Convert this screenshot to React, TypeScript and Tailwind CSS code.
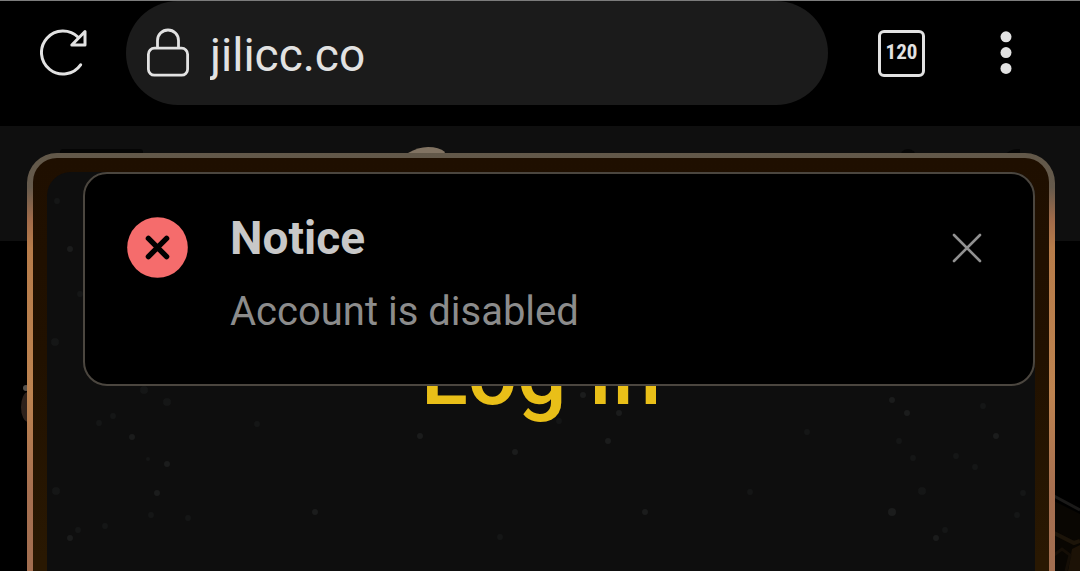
import React, { useState } from 'react';

interface Speck {
  x: number;
  y: number;
  r: number;
  tone: 'dim' | 'bright';
}

// Dust on the dialog background, in dialog coordinates
const specks: Speck[] = [
  { x: 10, y: 29, r: 3, tone: 'dim' },
  { x: 23, y: 77, r: 3, tone: 'bright' },
  { x: 33, y: 122, r: 3, tone: 'dim' },
  { x: 8, y: 170, r: 4, tone: 'dim' },
  { x: 97, y: 218, r: 4, tone: 'dim' },
  { x: 120, y: 230, r: 4, tone: 'dim' },
  { x: 52, y: 251, r: 3, tone: 'dim' },
  { x: 66, y: 244, r: 3, tone: 'dim' },
  { x: 85, y: 265, r: 3, tone: 'bright' },
  { x: 101, y: 287, r: 2, tone: 'dim' },
  { x: 120, y: 292, r: 3, tone: 'bright' },
  { x: 9, y: 319, r: 4, tone: 'dim' },
  { x: 110, y: 321, r: 3, tone: 'bright' },
  { x: 104, y: 343, r: 3, tone: 'dim' },
  { x: 23, y: 366, r: 3, tone: 'bright' },
  { x: 31, y: 358, r: 3, tone: 'dim' },
  { x: 58, y: 354, r: 3, tone: 'dim' },
  { x: 141, y: 346, r: 3, tone: 'dim' },
  { x: 210, y: 252, r: 3, tone: 'dim' },
  { x: 268, y: 340, r: 3, tone: 'bright' },
  { x: 373, y: 264, r: 3, tone: 'bright' },
  { x: 468, y: 280, r: 3, tone: 'bright' },
  { x: 561, y: 269, r: 3, tone: 'bright' },
  { x: 536, y: 223, r: 3, tone: 'bright' },
  { x: 572, y: 241, r: 3, tone: 'bright' },
  { x: 453, y: 365, r: 3, tone: 'dim' },
  { x: 512, y: 249, r: 3, tone: 'dim' },
  { x: 598, y: 340, r: 3, tone: 'bright' },
  { x: 703, y: 320, r: 3, tone: 'dim' },
  { x: 760, y: 260, r: 3, tone: 'dim' },
  { x: 845, y: 228, r: 3, tone: 'bright' },
  { x: 860, y: 241, r: 3, tone: 'bright' },
  { x: 852, y: 269, r: 3, tone: 'dim' },
  { x: 866, y: 286, r: 3, tone: 'dim' },
  { x: 936, y: 234, r: 3, tone: 'dim' },
  { x: 949, y: 264, r: 3, tone: 'bright' },
  { x: 909, y: 284, r: 3, tone: 'dim' },
  { x: 928, y: 295, r: 3, tone: 'dim' },
  { x: 875, y: 319, r: 4, tone: 'dim' },
  { x: 845, y: 340, r: 4, tone: 'bright' },
  { x: 889, y: 366, r: 3, tone: 'bright' },
  { x: 898, y: 358, r: 3, tone: 'dim' },
  { x: 976, y: 321, r: 3, tone: 'dim' },
  { x: 970, y: 343, r: 3, tone: 'dim' }
];

const ReloadIcon: React.FC = () => (
  <svg width="48" height="50" viewBox="0 0 48 50" fill="none" stroke="#e2e2e2" strokeWidth="3" strokeLinecap="round" strokeLinejoin="round" aria-hidden="true">
    <path d="M38.2 9.3 A21.5 21.5 0 1 0 40.6 36.8" />
    <path d="M45 3.5 V17 H31.8 Z" />
  </svg>
);

const LockIcon: React.FC = () => (
  <svg className="shrink-0" width="44" height="50" viewBox="0 0 44 50" fill="none" stroke="#e2e2e2" strokeWidth="2.8" aria-hidden="true">
    <rect x="2.4" y="20.2" width="39.2" height="27" rx="6" />
    <path d="M11.5 20.2 V12.5 A10.5 10.5 0 0 1 32.5 12.5 V20.2" />
  </svg>
);

const MenuIcon: React.FC = () => (
  <svg width="12" height="44" viewBox="0 0 12 44" fill="#e2e2e2" aria-hidden="true">
    <circle cx="6" cy="5.8" r="5.5" />
    <circle cx="6" cy="21.6" r="5.5" />
    <circle cx="6" cy="37.4" r="5.5" />
  </svg>
);

const BrowserBar: React.FC = () => (
  <header className="flex h-[126px] items-start border-t border-[#7c7c7c] bg-black pl-10">
    <button type="button" aria-label="Reload" className="flex h-26 w-12 shrink-0 items-center">
      <ReloadIcon />
    </button>
    <div className="ml-[38px] flex h-26 min-w-0 flex-1 items-center rounded-full bg-[#1b1b1b] pl-5">
      <LockIcon />
      <input
        type="text"
        aria-label="Address"
        defaultValue="jilicc.co"
        className="ml-5 min-w-0 flex-1 bg-transparent pt-1 text-[46px] leading-[56px] text-[#e2e2e2] outline-none"
      />
    </div>
    <button type="button" aria-label="Tabs" className="ml-[50px] flex h-26 w-12 shrink-0 items-center">
      <span className="flex h-[47px] w-[47px] items-center justify-center rounded-md border-3 border-[#e2e2e2] font-['Roboto_Condensed','Roboto',sans-serif] text-[21px] font-bold text-[#e2e2e2]">
        120
      </span>
    </button>
    <button type="button" aria-label="More options" className="ml-[50px] flex h-26 w-[104px] shrink-0 items-center justify-start pl-6">
      <MenuIcon />
    </button>
  </header>
);

const LoginDialog: React.FC = () => (
  <section
    aria-label="Log In"
    className="absolute top-[27px] right-[25px] bottom-0 left-[27px] rounded-t-[30px] bg-[linear-gradient(180deg,#625849_0px,#655a4c_34px,#a36c4a_68px,#b77c4a_95px,#bd8350_240px,#a66f50_340px,#a26e50_418px)] px-1.5 pt-[5px]"
  >
    <div className="h-full rounded-t-3xl bg-[linear-gradient(180deg,#1f0f00_0px,#211100_200px,#291802_400px)] px-3.5 pt-3.5">
      <div className="relative h-full overflow-hidden rounded-t-3xl bg-[#0e0e0e]">
        <svg className="absolute inset-0 h-full w-full" aria-hidden="true">
          {specks.map((speck, index) => (
            <circle
              key={index}
              cx={speck.x}
              cy={speck.y}
              r={speck.r}
              fill={speck.tone === 'bright' ? '#1b1c1c' : '#151616'}
            />
          ))}
        </svg>
        <h1 className="relative pt-[153px] text-center text-[87px] leading-[98px] font-medium text-[#e9bf18]">Log In</h1>
      </div>
    </div>
  </section>
);

const Notice: React.FC<{ onClose: () => void }> = ({ onClose }) => (
  <div
    role="alert"
    className="absolute top-[46px] right-[45px] left-[83px] flex items-start rounded-3xl border-2 border-[#4b463f] bg-black px-[42px] pt-[42px] pb-12"
  >
    <svg className="mt-px shrink-0" width="61" height="61" viewBox="0 0 61 61" aria-hidden="true">
      <circle cx="30.5" cy="30.5" r="30.3" fill="#f56c6c" />
      <path d="M21.4 21.4 L39.6 39.6 M39.6 21.4 L21.4 39.6" stroke="#000" strokeWidth="5.4" strokeLinecap="round" />
    </svg>
    <div className="ml-[42px] min-w-0 flex-1">
      <h2 className="text-[46px] leading-[44px] font-bold text-[#c8c8c8]">Notice</h2>
      <p className="mt-7 text-[40px] leading-[48px] text-[#8c8c8c]">Account is disabled</p>
    </div>
    <button type="button" aria-label="Close" onClick={onClose} className="mt-4 mr-2 shrink-0">
      <svg width="32" height="32" viewBox="0 0 32 32" fill="none" stroke="#919191" strokeWidth="2.6" strokeLinecap="round" aria-hidden="true">
        <path d="M3 3 L29 29 M29 3 L3 29" />
      </svg>
    </button>
  </div>
);

const App: React.FC = () => {
  const [open, setOpen] = useState(true);

  return (
    <div className="flex min-h-screen flex-col bg-black font-['Roboto',sans-serif]">
      <BrowserBar />
      <main className="relative flex-1 overflow-hidden">
        {/* Dimmed site header */}
        <div className="flex h-[115px] items-start bg-[#0f0f0f] px-[60px] pt-[21px]">
          <svg className="mt-0.5" width="83" height="8" aria-hidden="true">
            <rect width="83" height="8" rx="3" fill="#050505" />
          </svg>
          <svg className="ml-[265px]" width="38" height="14" viewBox="0 0 38 14" aria-hidden="true">
            <path d="M0 6 Q10 0 20 0 Q31 0 37 5 L32 14 H4 Z" fill="#817362" />
          </svg>
          <svg className="ml-auto" width="130" height="14" viewBox="0 0 130 14" fill="#060606" aria-hidden="true">
            <circle cx="18" cy="10" r="8" />
            <ellipse cx="128" cy="12" rx="14" ry="10" />
          </svg>
        </div>

        {/* Banner art showing beside the dialog */}
        <svg className="absolute top-[258px] left-5" width="16" height="40" viewBox="0 0 16 40" aria-hidden="true">
          <ellipse cx="8" cy="23" rx="7" ry="15" fill="#2e211b" />
          <circle cx="6" cy="4" r="3" fill="#56514c" />
        </svg>
        <svg className="absolute right-0 bottom-0" width="30" height="78" viewBox="0 0 30 78" fill="none" aria-hidden="true">
          <path d="M4 8 L30 21 V78 H4 Z" fill="#090602" />
          <path d="M4 3 L30 17" stroke="#1b1a19" strokeWidth="3" />
          <path d="M4 40 L24 50 L30 48" stroke="#1c1409" strokeWidth="4" />
          <path d="M22 56 L30 52 V78 H18 Z" fill="#1c1206" />
          <path d="M4 62 L12 56 L20 62 L16 78" stroke="#150e06" strokeWidth="3" />
        </svg>

        <LoginDialog />
        {open && <Notice onClose={() => setOpen(false)} />}
      </main>
    </div>
  );
};

export default App;
